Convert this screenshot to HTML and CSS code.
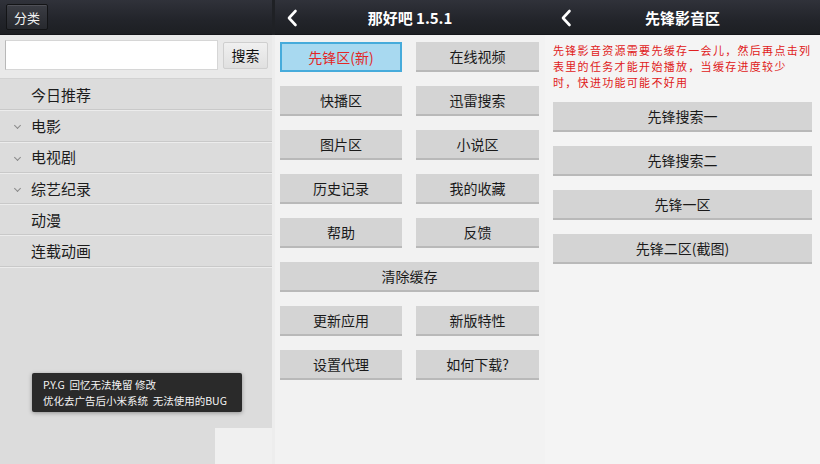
FILE: index.html
```html
<!DOCTYPE html>
<html lang="zh-CN">
<head>
<meta charset="utf-8">
<title>那好吧 1.5.1</title>
<link rel="stylesheet" href="styles.css">
</head>
<body>
<div class="screen">
  <!-- category drawer -->
  <section class="drawer">
    <header class="bar">
      <button class="bar-btn">分类</button>
    </header>
    <div class="search">
      <input class="search-input" type="text">
      <button class="search-btn">搜索</button>
    </div>
    <ul class="cats">
      <li class="cat">今日推荐</li>
      <li class="cat has-sub"><span class="chev"></span>电影</li>
      <li class="cat has-sub"><span class="chev"></span>电视剧</li>
      <li class="cat has-sub"><span class="chev"></span>综艺纪录</li>
      <li class="cat">动漫</li>
      <li class="cat">连载动画</li>
    </ul>
    <div class="toast">P.Y.G&nbsp; 回忆无法挽留 修改<br>优化去广告后小米系统&nbsp; 无法使用的BUG</div>
    <div class="corner"></div>
  </section>

  <div class="divider"></div>

  <!-- main menu -->
  <section class="panel mid">
    <header class="bar">
      <svg class="back" viewBox="0 0 12 18" width="12" height="18"><path d="M9.5 2 L3 9 L9.5 16" fill="none" stroke="#fff" stroke-width="2.6" stroke-linecap="round" stroke-linejoin="round"/></svg>
      <h1 class="title">那好吧 1.5.1</h1>
    </header>
    <div class="grid">
      <button class="btn active">先锋区(新)</button>
      <button class="btn">在线视频</button>
      <button class="btn">快播区</button>
      <button class="btn">迅雷搜索</button>
      <button class="btn">图片区</button>
      <button class="btn">小说区</button>
      <button class="btn">历史记录</button>
      <button class="btn">我的收藏</button>
      <button class="btn">帮助</button>
      <button class="btn">反馈</button>
      <button class="btn wide">清除缓存</button>
      <button class="btn">更新应用</button>
      <button class="btn">新版特性</button>
      <button class="btn">设置代理</button>
      <button class="btn">如何下载?</button>
    </div>
  </section>

  <!-- xianfeng section -->
  <section class="panel right">
    <header class="bar">
      <svg class="back" viewBox="0 0 12 18" width="12" height="18"><path d="M9.5 2 L3 9 L9.5 16" fill="none" stroke="#fff" stroke-width="2.6" stroke-linecap="round" stroke-linejoin="round"/></svg>
      <h1 class="title">先锋影音区</h1>
    </header>
    <p class="notice">先锋影音资源需要先缓存一会儿，然后再点击列<br>表里的任务才能开始播放，当缓存进度较少<br>时，快进功能可能不好用</p>
    <div class="list">
      <button class="btn">先锋搜索一</button>
      <button class="btn">先锋搜索二</button>
      <button class="btn">先锋一区</button>
      <button class="btn">先锋二区(截图)</button>
    </div>
  </section>
</div>
</body>
</html>
```

FILE: styles.css
```css
* { box-sizing: border-box; margin: 0; padding: 0; }

html, body {
  width: 820px;
  height: 464px;
  overflow: hidden;
}

body {
  font-family: "Noto Sans CJK SC", "Liberation Sans", sans-serif;
  background: #f2f2f2;
  color: #1a1a1a;
}

.screen {
  display: flex;
  width: 820px;
  height: 464px;
}

/* dark action bar shared by all panels */
.bar {
  height: 35px;
  flex: none;
  display: flex;
  align-items: center;
  background: linear-gradient(#30323a, #22242a 60%, #1d1f23);
  border-bottom: 1px solid #15161a;
  position: relative;
}

/* ---------- drawer ---------- */
.drawer {
  width: 272px;
  flex: none;
  display: flex;
  flex-direction: column;
  background: #dcdcdc;
  position: relative;
}

.drawer .bar { padding-left: 6px; }

.bar-btn {
  width: 42px;
  height: 26px;
  font: 13px "Noto Sans CJK SC", sans-serif;
  color: #f2f2f2;
  background: linear-gradient(#3b3d44, #27292e);
  border: 1px solid #131416;
  border-radius: 2px;
  box-shadow: inset 0 1px 0 rgba(255,255,255,0.1);
}

.search {
  display: flex;
  align-items: center;
  gap: 5px;
  height: 44px;
  padding: 0 4px 3px 5px;
  background: #e9e9e9;
  border-bottom: 1px solid #d2d2d2;
}

.search-input {
  width: 214px;
  height: 30px;
  background: #fff;
  border: 1px solid #d6d6d6;
  border-left: 1px solid #b8b8b8;
}

.search-btn {
  width: 45px;
  height: 27px;
  font: 14px "Noto Sans CJK SC", sans-serif;
  color: #111;
  background: linear-gradient(#f0f0f0, #e0e0e0);
  border: 1px solid #cfcfcf;
  border-radius: 2px;
}

.cats { list-style: none; }

.cat {
  height: 31.3px;
  display: flex;
  align-items: center;
  padding-left: 31px;
  font-size: 15px;
  color: #1c1c1c;
  border-bottom: 1px solid #c9c9c9;
  box-shadow: 0 1px 0 #ececec;
  position: relative;
}

.chev {
  position: absolute;
  left: 15px;
  top: 13px;
  width: 5px;
  height: 5px;
  border-right: 1px solid #8a8a8a;
  border-bottom: 1px solid #8a8a8a;
  transform: rotate(45deg);
}

.toast {
  position: absolute;
  left: 32px;
  top: 373px;
  width: 210px;
  height: 39px;
  padding: 4px 0 0 11px;
  background: #2a2a2a;
  color: #f4f4f4;
  font-size: 10.5px;
  line-height: 15.5px;
  border-radius: 2px;
  box-shadow: 0 1px 4px rgba(0,0,0,0.35);
  white-space: nowrap;
}

.corner {
  position: absolute;
  left: 215px;
  top: 428px;
  width: 57px;
  height: 36px;
  background: #f0f0f0;
}

.divider {
  width: 3px;
  flex: none;
  background: #ededed;
  border-top: 35px solid #1f2125;
}

/* ---------- content panels ---------- */
.panel {
  display: flex;
  flex-direction: column;
  background: #f2f2f2;
}

.mid { width: 270px; flex: none; }
.right { flex: 1; background: #f4f4f4; }

.back {
  position: absolute;
  top: 9px;
}
.mid .back { left: 11px; }
.right .back { left: 15px; }

.title {
  flex: 1;
  text-align: center;
  font-size: 15px;
  font-weight: 700;
  color: #fff;
}

.btn {
  height: 30px;
  font: 14px "Noto Sans CJK SC", sans-serif;
  color: #1a1a1a;
  background: #d4d4d4;
  border: none;
  border-bottom: 2px solid #b9b9b9;
}

.grid {
  display: grid;
  grid-template-columns: 122px 123px;
  column-gap: 14px;
  row-gap: 14px;
  padding: 7px 0 0 5px;
}

.grid .wide { grid-column: 1 / span 2; }

.btn.active {
  background: #a8d9f0;
  border: 2px solid #46abdb;
  color: #e32626;
}

.notice {
  padding: 7px 0 0 8px;
  font-size: 11px;
  letter-spacing: 1.3px;
  line-height: 16px;
  color: #e02020;
  height: 60px;
  white-space: nowrap;
}

.list {
  display: flex;
  flex-direction: column;
  gap: 14px;
  padding: 7px 8px 0 8px;
}
```
